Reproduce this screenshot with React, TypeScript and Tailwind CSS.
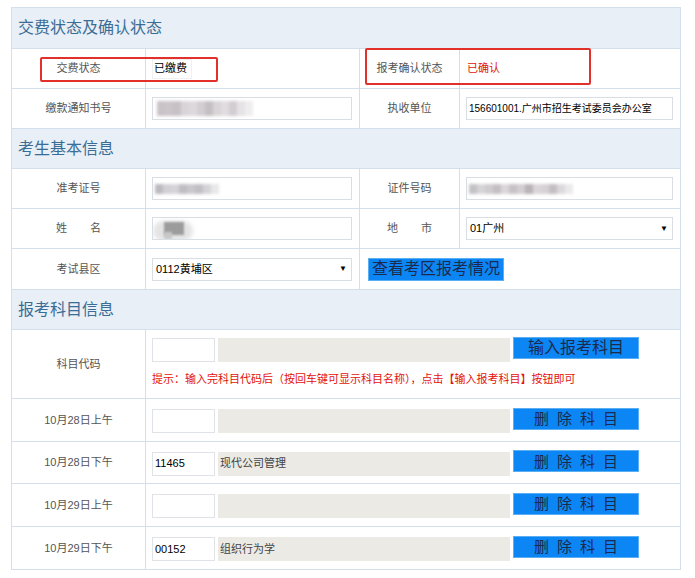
import React from "react"

const font = "font-['Liberation_Sans','Noto_Sans_CJK_SC',sans-serif]"

function Header({ title }: { title: string }) {
  return (
    <div className="h-[40px] bg-[#e8eff7] flex items-center pl-[6px] text-[16px] text-[#3a6d96] border-t border-[#d3dfea] first:border-t-0">
      {title}
    </div>
  )
}

function Label({ children }: { children: React.ReactNode }) {
  return <div className="flex items-center justify-center text-[11px] text-[#555]">{children}</div>
}

function Spread({ a, b }: { a: string; b: string }) {
  return (
    <span className="flex w-[45px] justify-between">
      <span>{a}</span>
      <span>{b}</span>
    </span>
  )
}

function Blur({ blocks, className }: { blocks: string[]; className: string }) {
  // mosaic used to hide personal data
  return (
    <div className={`flex blur-[1.5px] ${className}`}>
      {blocks.map((c, i) => (
        <div key={i} className="h-full w-[8px]" style={{ background: c }} />
      ))}
    </div>
  )
}

function TextBox({ children, className = "" }: { children?: React.ReactNode; className?: string }) {
  return (
    <div
      className={`h-[23px] border border-[#d9dee4] bg-white flex items-center px-[2px] text-black whitespace-nowrap overflow-hidden ${className}`}
    >
      {children}
    </div>
  )
}

function Select({ value, className = "" }: { value: string; className?: string }) {
  return (
    <div
      className={`h-[23px] border border-[#d9dee4] bg-white flex items-center justify-between pl-[3px] pr-[4px] text-[11px] text-black ${className}`}
    >
      <span>{value}</span>
      <span className="text-[8px]">▼</span>
    </div>
  )
}

function BlueButton({ children, className = "" }: { children: React.ReactNode; className?: string }) {
  return (
    <div
      className={`h-[22px] bg-[#0d86f5] border border-[#5aaef2] flex items-center justify-center leading-none text-[#1b2a4c] ${className}`}
    >
      {children}
    </div>
  )
}

const grid4 = "grid grid-cols-[133px_214px_100px_221px] border-t border-[#d3dfea]"
const cellL = "border-l border-[#d3dfea]"

function SubjectRow({ date, code, name, h }: { date: string; code?: string; name?: string; h: string }) {
  return (
    <div className={`grid grid-cols-[133px_535px] border-t border-[#d3dfea] ${h}`}>
      <Label>{date}</Label>
      <div className={`${cellL} flex items-center pl-[6px]`}>
        <div className="h-[24px] w-[63px] border border-[#dfe3e8] bg-white flex items-center px-[2px] text-[11px] text-black mt-[2px]">
          {code}
        </div>
        <div className="h-[24px] w-[292px] ml-[3px] bg-[#ebeae5] flex items-center px-[2px] text-[11px] text-[#444] mt-[2px]">
          {name}
        </div>
        <BlueButton className="ml-[3px] w-[126px] -mt-[3px] text-[15px] gap-[8px]">
          <span>删</span>
          <span>除</span>
          <span>科</span>
          <span>目</span>
        </BlueButton>
      </div>
    </div>
  )
}

export default function App() {
  return (
    <div className={`${font} w-[695px] h-[578px] bg-white pt-[7px] pl-[11px]`}>
      <div className="relative w-[670px] border border-[#d3dfea]">
        {/* 交费状态及确认状态 */}
        <Header title="交费状态及确认状态" />
        <div className={`${grid4} h-[40px]`}>
          <Label>交费状态</Label>
          <div className={`${cellL} flex items-center pl-[6px]`}>
            <div className="h-[20px] w-[40px] border border-[#eef0f2] flex items-center pl-[1px] text-[11px] text-black">
              已缴费
            </div>
          </div>
          <div className={cellL}>
            <Label>
              <span className="h-[39px] flex items-center">报考确认状态</span>
            </Label>
          </div>
          <div className={`${cellL} flex items-center pl-[7px] text-[11px] text-[#e3120b]`}>已确认</div>
        </div>
        <div className={`${grid4} h-[40px]`}>
          <Label>缴款通知书号</Label>
          <div className={`${cellL} flex items-center pl-[6px]`}>
            <TextBox className="w-[200px] relative">
              <Blur
                className="h-[15px] ml-[2px]"
                blocks={["#c9c2c7", "#cbc4c9", "#c7c0c5", "#d9d4d8", "#ddd8dc", "#d3ced2", "#c4bfc3", "#d8d4d7", "#e0dcdf", "#d2cdd1", "#e6e3e6", "#eeeeee"]}
              />
            </TextBox>
          </div>
          <div className={cellL}>
            <Label>
              <span className="h-[39px] flex items-center">执收单位</span>
            </Label>
          </div>
          <div className={`${cellL} flex items-center pl-[6px]`}>
            <TextBox className="w-[207px] text-[10px]">156601001.广州市招生考试委员会办公室</TextBox>
          </div>
        </div>

        {/* 考生基本信息 */}
        <Header title="考生基本信息" />
        <div className={`${grid4} h-[40px]`}>
          <Label>准考证号</Label>
          <div className={`${cellL} flex items-center pl-[6px]`}>
            <TextBox className="w-[200px]">
              <Blur
                className="h-[10px]"
                blocks={["#bdbabf", "#d3d0d5", "#d6d3d8", "#c0bdc2", "#cac7cc", "#c2bfc4", "#d6d3d8", "#e8e8ea"]}
              />
            </TextBox>
          </div>
          <div className={cellL}>
            <Label>
              <span className="h-[39px] flex items-center">证件号码</span>
            </Label>
          </div>
          <div className={`${cellL} flex items-center pl-[6px]`}>
            <TextBox className="w-[207px]">
              <Blur
                className="h-[10px]"
                blocks={["#c4c1c5", "#d7d4d8", "#cfcbcf", "#c3bfc4", "#dad6da", "#c6c2c6", "#d2ced2", "#b9b2b6", "#d9d5d9", "#d5d1d5", "#c2bec2", "#dcd9dc", "#ebeaeb"]}
              />
            </TextBox>
          </div>
        </div>
        <div className={`${grid4} h-[40px]`}>
          <Label>
            <Spread a="姓" b="名" />
          </Label>
          <div className={`${cellL} flex items-center pl-[6px]`}>
            <TextBox className="w-[200px] relative">
              <div className="absolute left-[0px] top-[3px] h-[20px] w-[40px] rounded-[10px] bg-[#e4e4e4] blur-[2px]" />
              <div className="absolute left-[11px] top-[4px] h-[13px] w-[20px] bg-[#9c9c9c] blur-[1px]" />
              <div className="absolute left-[11px] top-[14px] h-[7px] w-[8px] bg-[#c8c8c8] blur-[1px]" />
            </TextBox>
          </div>
          <div className={cellL}>
            <Label>
              <span className="h-[39px] flex items-center">
                <Spread a="地" b="市" />
              </span>
            </Label>
          </div>
          <div className={`${cellL} flex items-center pl-[6px]`}>
            <Select value="01广州" className="w-[207px]" />
          </div>
        </div>
        <div className={`${grid4} h-[41px]`}>
          <Label>考试县区</Label>
          <div className={`${cellL} flex items-center pl-[6px]`}>
            <Select value="0112黄埔区" className="w-[200px]" />
          </div>
          <div className={`${cellL} col-span-2 flex items-center pl-[8px]`}>
            <BlueButton className="w-[136px] h-[23px] text-[16px]">查看考区报考情况</BlueButton>
          </div>
        </div>

        {/* 报考科目信息 */}
        <Header title="报考科目信息" />
        <div className="grid grid-cols-[133px_535px] border-t border-[#d3dfea] h-[69px]">
          <Label>科目代码</Label>
          <div className={`${cellL} flex flex-col pl-[6px] pt-[8px]`}>
            <div className="flex items-start">
              <div className="h-[24px] w-[63px] border border-[#dfe3e8] bg-white" />
              <div className="h-[24px] w-[292px] ml-[3px] bg-[#ebeae5]" />
              <BlueButton className="ml-[3px] w-[126px] -mt-[1px] text-[16px]">输入报考科目</BlueButton>
            </div>
            <div className="mt-[9px] text-[11px] text-[#e3120b] whitespace-nowrap">
              提示：输入完科目代码后（按回车键可显示科目名称），点击【输入报考科目】按钮即可
            </div>
          </div>
        </div>
        <SubjectRow date="10月28日上午" h="h-[43px]" />
        <SubjectRow date="10月28日下午" code="11465" name="现代公司管理" h="h-[42px]" />
        <SubjectRow date="10月29日上午" h="h-[43px]" />
        <SubjectRow date="10月29日下午" code="00152" name="组织行为学" h="h-[43px]" />

        {/* red highlight boxes */}
        <div className="absolute left-[28px] top-[49px] w-[178px] h-[25px] border-2 border-[#e2302a] rounded-[2px]" />
        <div className="absolute left-[353px] top-[40px] w-[226px] h-[37px] border-2 border-[#e2302a] rounded-[2px]" />
      </div>
    </div>
  )
}
